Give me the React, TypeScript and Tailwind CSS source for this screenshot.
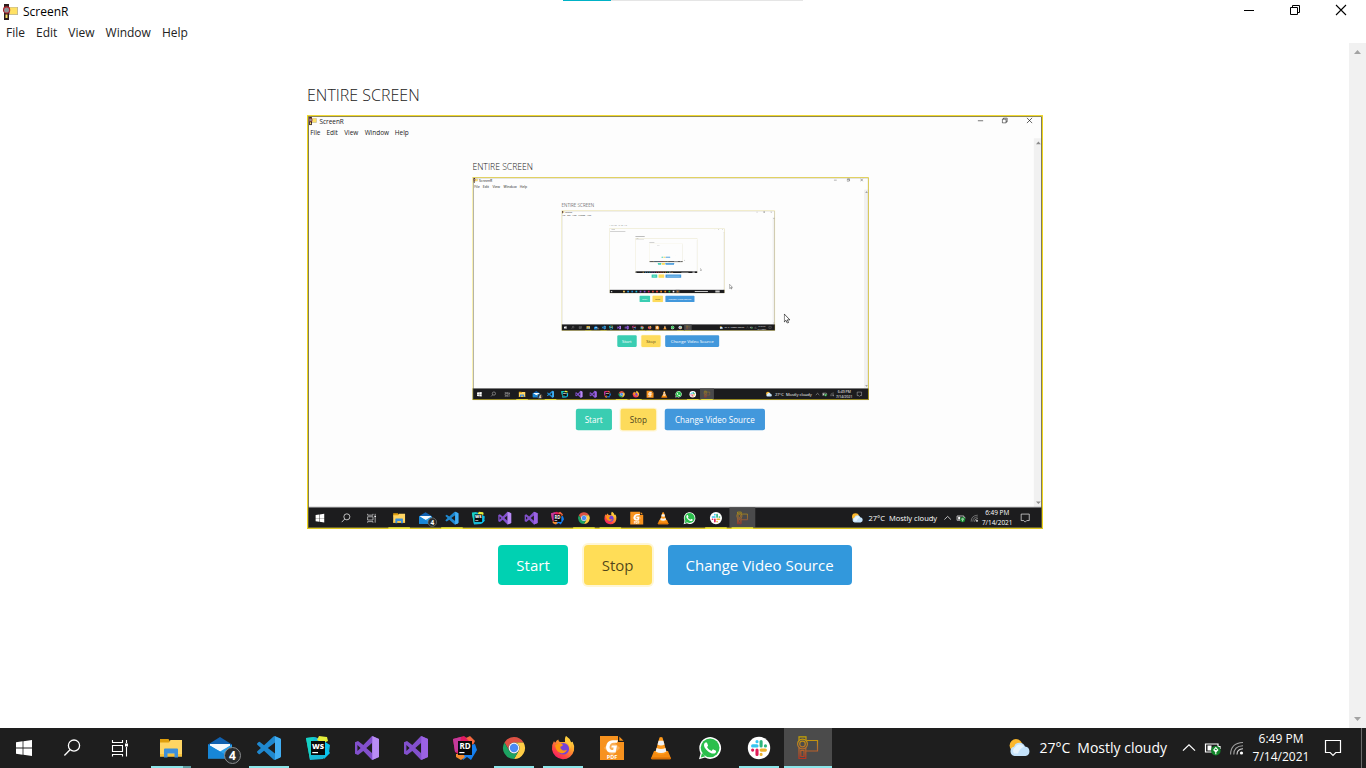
import type { ComponentType, ReactNode, SVGProps } from "react";

type IconProps = SVGProps<SVGSVGElement>;
type Icon = ComponentType<IconProps>;

const FRAME_FONT = "'Open Sans', 'Noto Sans', sans-serif";

function Icon24({ children, ...rest }: IconProps & { children: ReactNode }) {
  return (
    <svg width={24} height={24} viewBox="0 0 24 24" overflow="visible" aria-hidden="true" {...rest}>
      {children}
    </svg>
  );
}

const StartLogo: Icon = (p) => (
  <Icon24 {...p}>
    <path fill="#fff" d="M4 6.3 10.6 5.3V11.6H4ZM11.4 5.2 20 4V11.6H11.4ZM4 12.4H10.6V18.7L4 17.7ZM11.4 12.4H20V20L11.4 18.8Z" />
  </Icon24>
);

const SearchGlyph: Icon = (p) => (
  <Icon24 {...p}>
    <g fill="none" stroke="#fff" strokeWidth="1.3">
      <circle cx="14" cy="9.6" r="5.6" />
      <path d="M10 13.7 4.4 19.5" />
    </g>
  </Icon24>
);

const TaskViewGlyph: Icon = (p) => (
  <Icon24 {...p}>
    <g fill="none" stroke="#fff" strokeWidth="1.1">
      <path d="M4.5 4V6.5H14.5V4M4.5 9.5H14.5V15.5H4.5ZM4.5 20.5V18.5H14.5V20.5M18.5 4V7M18.5 11V20.5" />
    </g>
    <path fill="#fff" d="M17 7.5H20V10.5H17Z" />
  </Icon24>
);

const Explorer: Icon = (p) => (
  <Icon24 {...p}>
    <path fill="#e09f0c" d="M1 3H9.5L11 5.5V9H1Z" />
    <path fill="#ffd563" d="M1 6.5H10L11.5 4H23V20.5H1Z" />
    <path fill="#f6c13c" d="M1 18H23V20.5H1Z" />
    <path fill="#3d8fda" d="M5 13.5Q5 12.5 6 12.5H18Q19 12.5 19 13.5V21.5H15.5V17.5H8.5V21.5H5Z" />
  </Icon24>
);

const Mail: Icon = (p) => (
  <Icon24 {...p}>
    <path fill="#1061b0" d="M0 8.5 12 1 24 8.5V12H0Z" />
    <path fill="#f4f9fd" d="M2 8H22V10L12 17 2 10Z" />
    <path fill="#2aa1ec" d="M0 8.5 12 15.5 24 8.5V22.5H0Z" />
    <path fill="#1787d8" d="M0 8.5 12 15.5 24 22.5H0Z" />
    <circle cx="24.5" cy="19.5" r="8" fill="#292c2e" stroke="#8a8c8e" strokeWidth="1" />
    <text x="24.5" y="24" textAnchor="middle" fill="#fff" fontSize="12" fontWeight="700" fontFamily={FRAME_FONT}>
      4
    </text>
  </Icon24>
);

const VsCode: Icon = (p) => (
  <Icon24 {...p}>
    <path
      fill="#1f88cf"
      d="M23.15 2.587L18.21.21a1.494 1.494 0 0 0-1.705.29l-9.46 8.63-4.12-3.128a.999.999 0 0 0-1.276.057L.327 7.261A1 1 0 0 0 .326 8.74L3.899 12 .326 15.26a1 1 0 0 0 .001 1.479L1.65 17.94a.999.999 0 0 0 1.276.057l4.12-3.128 9.46 8.63a1.492 1.492 0 0 0 1.704.29l4.942-2.377A1.5 1.5 0 0 0 24 20.06V3.939a1.5 1.5 0 0 0-.85-1.352zm-5.146 14.861L10.826 12l7.178-5.448v10.896z"
    />
    <path fill="#41aef3" d="M18 .2 23.2 2.6Q24 3 24 4V20Q24 21 23.2 21.4L18 23.8Z" />
  </Icon24>
);

function StudioMark({ slab, ...p }: IconProps & { slab: string }) {
  return (
    <Icon24 {...p}>
      <path
        fill="#8250cc"
        fillRule="evenodd"
        d="M17 0 24 3V21L17 24 8.3 15 3 19 0 17.7V6.3L3 5 8.3 9ZM17 7 11.3 12 17 17ZM2.4 9V15L5.6 12Z"
      />
      <path fill={slab} d="M17.3 0 24 3V21L17.3 24Z" />
    </Icon24>
  );
}

const Studio: Icon = (p) => <StudioMark slab="#b98cf4" {...p} />;
const StudioOlder: Icon = (p) => <StudioMark slab="#9b62e4" {...p} />;

const WebStorm: Icon = (p) => (
  <Icon24 {...p}>
    <path fill="#19b8d8" d="M0 2 9 1 14 3 24 9 23 17 17 23 4 24Z" />
    <path fill="#15d2c3" d="M0 2 8 1 5 14 4 24Z" />
    <path fill="#e5ef3b" d="M11 4 13 0 21 1 22 5 17 7Z" />
    <path fill="#08c4f0" d="M19 6 23 9 21 13 24 17 18 23Z" />
    <path fill="#0a0a0a" d="M5 5H19V19H5Z" />
    <text x="12" y="12.6" textAnchor="middle" fill="#fff" fontSize="7.5" fontWeight="800" fontFamily={FRAME_FONT}>
      WS
    </text>
    <path fill="#fff" d="M6.3 16H12V17.2H6.3Z" />
  </Icon24>
);

const Rider: Icon = (p) => (
  <Icon24 {...p}>
    <path fill="#e01b62" d="M0 3 11 0 18 5V12L8 20 2 16Z" />
    <path fill="#c33a9b" d="M0 3 8 1 6 15 2 16Z" />
    <path fill="#f4683f" d="M13 2 17 0 22 5 20 9 17 6Z" />
    <path fill="#1580f0" d="M18 9 22 8 24 14 18 24 14 21 10 24 7 19Z" />
    <path fill="#f58a2c" d="M3 18 10 18 12 21 8 24 3 21Z" />
    <path fill="#0a0a0a" d="M5 5H19V19H5Z" />
    <text x="12" y="12.8" textAnchor="middle" fill="#fff" fontSize="8" fontWeight="700" fontFamily={FRAME_FONT}>
      RD
    </text>
    <path fill="#fff" d="M6.3 16H11.5V17.2H6.3Z" />
  </Icon24>
);

const Chrome: Icon = (p) => (
  <Icon24 {...p}>
    <path fill="#dd5144" d="M2.47 6.5A11 11 0 0 1 21.53 6.5H12A5.5 5.5 0 0 0 7.24 14.75Z" />
    <path fill="#ffcd46" d="M12 6.5H21.53A11 11 0 0 1 12 23L16.76 14.75A5.5 5.5 0 0 0 12 6.5Z" />
    <path fill="#1da362" d="M2.47 6.5 7.24 14.75A5.5 5.5 0 0 0 16.76 14.75L12 23A11 11 0 0 1 2.47 6.5Z" />
    <circle cx="12" cy="12" r="5.4" fill="#f5f5f5" />
    <circle cx="12" cy="12" r="4.2" fill="#4a8af4" />
  </Icon24>
);

const Firefox: Icon = (p) => (
  <Icon24 {...p}>
    <defs>
      <linearGradient id="fox" x1="0.9" y1="0" x2="0.2" y2="1">
        <stop offset="0" stopColor="#fff04e" />
        <stop offset="0.4" stopColor="#ffa12c" />
        <stop offset="0.75" stopColor="#ff4543" />
        <stop offset="1" stopColor="#f5156c" />
      </linearGradient>
    </defs>
    <path
      fill="url(#fox)"
      d="M15 0Q18.5 2 20 6Q21 6.5 21.5 5.5Q24 10 23 14.5A11.2 11.2 0 0 1 1 13.5Q.6 8.5 3 5Q3.5 6.5 4.5 6.5Q5 4.5 7.3 3.5Q7.5 5.5 9 6H14Q13.5 2.5 15 0Z"
    />
    <circle cx="12.3" cy="12.8" r="5.8" fill="#7542d8" />
    <path fill="#ff980e" d="M4 9.5Q8 6 12 8.8Q11.8 10.4 9.3 10.8Q9 13 11.5 14.2Q14 15 16 13.8Q14.4 17.6 10.4 17.2Q5.5 16.6 4 9.5Z" />
    <path fill="#ffcb3a" d="M14.5 6.3Q19.5 8 18.6 13.5Q21 9.5 18.4 6.5Q15.8 4 15 0Q13.4 3 14.5 6.3Z" />
  </Icon24>
);

const Foxit: Icon = (p) => (
  <Icon24 {...p}>
    <path fill="#f7921e" d="M0 0H18V6H24V24H0Z" />
    <path fill="#f7921e" d="M19.3 .5 23.5 4.7H19.3Z" />
    <path fill="#f9ad55" d="M12 4 20 12 12 20 4 12Z" />
    <path
      fill="#fff"
      d="M18 4.2H13Q6.5 4.5 6 11Q6 16.6 11.5 16.6H15.6L17 9.6H11.8L11.3 11.6H13.6L13.2 14H11.6Q9.2 13.6 9.6 10.6Q10.2 7 13.6 6.8H17Z"
    />
    <text x="12" y="22.8" textAnchor="middle" fill="#fff" fontSize="5.5" fontWeight="700" fontFamily={FRAME_FONT}>
      PDF
    </text>
  </Icon24>
);

const Vlc: Icon = (p) => (
  <Icon24 {...p}>
    <path fill="#f58b10" d="M5 15H19L22 22.5Q22 23.3 21 23.3H3Q2 23.3 2 22.5Z" />
    <path fill="#d86f04" d="M2 21.5H22V22.5Q22 23.3 21 23.3H3Q2 23.3 2 22.5Z" />
    <path fill="#ff9a1c" d="M10.5 1.5Q12 .5 13.5 1.5L17.8 17Q12 20.5 6.2 17Z" />
    <path fill="#f1f3f5" d="M9.6 4.7H14.4L15.5 8.6Q12 10.3 8.5 8.6ZM7.6 12Q12 14.2 16.4 12L17.4 15.6Q12 18.6 6.6 15.6Z" />
  </Icon24>
);

const WhatsApp: Icon = (p) => (
  <Icon24 {...p}>
    <path fill="#fff" d="M1 23.2 2.6 17.2A10.9 10.9 0 1 1 7 21.6Z" />
    <path fill="#2bbf4c" d="M2.8 21.4 4 17 7.4 20.2Z" />
    <circle cx="12.1" cy="11.8" r="9.4" fill="#2bbf4c" />
    <path
      fill="#fff"
      d="M17.472 14.382c-.297-.149-1.758-.867-2.03-.967-.273-.099-.471-.148-.67.15-.197.297-.767.966-.94 1.164-.173.199-.347.223-.644.075-.297-.15-1.255-.463-2.39-1.475-.883-.788-1.48-1.761-1.653-2.059-.173-.297-.018-.458.13-.606.134-.133.298-.347.446-.52.149-.174.198-.298.298-.497.099-.198.05-.371-.025-.52-.075-.149-.669-1.612-.916-2.207-.242-.579-.487-.5-.669-.51-.173-.008-.371-.01-.57-.01-.198 0-.52.074-.792.372-.272.297-1.04 1.016-1.04 2.479 0 1.462 1.065 2.875 1.213 3.074.149.198 2.096 3.2 5.077 4.487.709.306 1.262.489 1.694.625.712.227 1.36.195 1.871.118.571-.085 1.758-.719 2.006-1.413.248-.694.248-1.289.173-1.413-.074-.124-.272-.198-.57-.347z"
    />
  </Icon24>
);

const Slack: Icon = (p) => (
  <Icon24 {...p}>
    <circle cx="12" cy="12" r="11.2" fill="#fff" />
    <g strokeWidth="3.1" strokeLinecap="round" fill="none">
      <path stroke="#36c5f0" d="M5.6 9.9H10M10 5.6V5.7" />
      <path stroke="#2eb67d" d="M14.1 5.6V9.9M18.4 9.9H18.5" />
      <path stroke="#ecb22e" d="M14.1 14.1H18.4M14.1 18.4V18.5" />
      <path stroke="#e01e5a" d="M10 14.1V18.4M5.6 14.1H5.7" />
    </g>
  </Icon24>
);

const CamcorderOutline: Icon = (p) => (
  <Icon24 {...p}>
    <defs>
      <linearGradient id="cam" gradientUnits="userSpaceOnUse" x1="0" y1="0" x2="0" y2="24">
        <stop offset="0" stopColor="#c8a800" />
        <stop offset="0.5" stopColor="#b8702c" />
        <stop offset="1" stopColor="#b82c20" />
      </linearGradient>
    </defs>
    <g fill="none" stroke="url(#cam)" strokeWidth="1.2">
      <path d="M3 4V.8H10V4M10.5 4.5H21.5V15H10M3 12V22.5H9.8V12M4.8 14.5H8V20.5H4.8Z" />
      <circle cx="6.5" cy="8" r="4.9" />
      <circle cx="6.5" cy="8" r="2.8" />
    </g>
  </Icon24>
);

const Camcorder: Icon = (p) => (
  <svg width={16} height={16} viewBox="0 0 16 16" aria-hidden="true" {...p}>
    <path fill="#2c1d1d" d="M1 0H6V3H6.500V11H6V16H1Z" />
    <path fill="#b9b39a" d="M6.500 3H15V11H6.500Z" />
    <path fill="#ffe164" d="M7 3.5H14.2V10.3H7ZM2.5 10.5H4.5V14H2.5Z" />
    <circle cx="3.6" cy="6" r="3.1" fill="#8d9397" stroke="#b3222b" strokeWidth="1.1" />
  </svg>
);

const Weather: Icon = (p) => (
  <Icon24 {...p}>
    <circle cx="8" cy="9.5" r="6.4" fill="#fbb72c" />
    <path fill="#c4e2fa" d="M6.5 20A4.7 4.7 0 0 1 6 10.8 5.8 5.8 0 0 1 17 10.5 4.8 4.8 0 0 1 17.5 20Z" />
    <path fill="#e6f4fe" d="M6.2 17.5A3.7 3.7 0 0 1 7 11.5 5.2 5.2 0 0 1 16 10.6Q11 13.5 10 17.5Z" />
  </Icon24>
);

const Chevron: Icon = (p) => (
  <Icon24 {...p}>
    <path fill="none" stroke="#fff" strokeWidth="1.3" d="M6 14.6 12 8.8 18 14.6" />
  </Icon24>
);

const Battery: Icon = (p) => (
  <Icon24 {...p}>
    <path fill="none" stroke="#fff" strokeWidth="1.2" d="M4.5 8H17V16H4.5ZM17.5 10.5H19V13" />
    <path fill="#fff" d="M6.5 9.5H10.5V14.5H6.5Z" />
    <circle cx="14.8" cy="14.7" r="4.8" fill="#12862a" />
    <path fill="none" stroke="#fff" strokeWidth="1.1" d="M14.8 18.2V14M14.8 11.6 12.8 14 14.8 16 16.8 14Z" />
  </Icon24>
);

const Wifi: Icon = (p) => (
  <Icon24 {...p}>
    <g fill="none" strokeWidth="1.1">
      <path stroke="#a2a2a2" d="M5.6 18.5Q5.6 7 18 6.5M8.8 18.5Q8.8 10 18 9.8" />
      <path stroke="#d8d8d8" d="M12 18.5Q12 13 18 12.8" />
    </g>
    <circle cx="16.5" cy="17" r="1.6" fill="#fff" />
  </Icon24>
);

const ActionCenter: Icon = (p) => (
  <Icon24 {...p}>
    <path fill="none" stroke="#fff" strokeWidth="1.2" d="M4.5 4.5H19.5V16.5H14.8L12 19.4 9.2 16.5H4.5Z" />
  </Icon24>
);

const MinimizeGlyph: Icon = (p) => (
  <svg width={12} height={12} viewBox="0 0 12 12" aria-hidden="true" {...p}>
    <path stroke="#000" d="M1 6.5H11" />
  </svg>
);

const RestoreGlyph: Icon = (p) => (
  <svg width={12} height={12} viewBox="0 0 12 12" fill="none" aria-hidden="true" {...p}>
    <path stroke="#000" d="M1.5 3.5H8.5V10.5H1.5ZM3.5 3.5V1.5H10.5V8.5H8.5" />
  </svg>
);

const CloseGlyph: Icon = (p) => (
  <svg width={12} height={12} viewBox="0 0 12 12" aria-hidden="true" {...p}>
    <path stroke="#000" strokeWidth="1.1" d="M1 1 11 11M11 1 1 11" />
  </svg>
);

const Pointer: Icon = (p) => (
  <svg width={12} height={19} viewBox="0 0 12 19" aria-hidden="true" {...p}>
    <path fill="#fff" stroke="#000" strokeWidth="1.2" d="M.6 1V16L4 12.8 6.4 18.2 8.8 17.1 6.5 12H11.2Z" />
  </svg>
);

type Running = "none" | "open" | "grouped" | "active";

const SHELL: { name: string; icon: Icon }[] = [
  { name: "Start menu", icon: StartLogo },
  { name: "Search", icon: SearchGlyph },
  { name: "Task View", icon: TaskViewGlyph },
];

const APPS: { name: string; icon: Icon; running: Running; tint: string }[] = [
  { name: "File Explorer", icon: Explorer, running: "grouped", tint: "#ffd563" },
  { name: "Mail", icon: Mail, running: "none", tint: "#2aa1ec" },
  { name: "Visual Studio Code", icon: VsCode, running: "open", tint: "#1f88cf" },
  { name: "WebStorm", icon: WebStorm, running: "none", tint: "#19b8d8" },
  { name: "Visual Studio", icon: Studio, running: "none", tint: "#8250cc" },
  { name: "Visual Studio 2019", icon: StudioOlder, running: "none", tint: "#8250cc" },
  { name: "Rider", icon: Rider, running: "none", tint: "#e01b62" },
  { name: "Chrome", icon: Chrome, running: "open", tint: "#dd5144" },
  { name: "Firefox", icon: Firefox, running: "open", tint: "#ff4543" },
  { name: "Foxit PDF", icon: Foxit, running: "none", tint: "#f7921e" },
  { name: "VLC", icon: Vlc, running: "none", tint: "#f58b10" },
  { name: "WhatsApp", icon: WhatsApp, running: "none", tint: "#2bbf4c" },
  { name: "Slack", icon: Slack, running: "open", tint: "#ffffff" },
  { name: "ScreenR", icon: CamcorderOutline, running: "active", tint: "#b8702c" },
];

const MENUS = ["File", "Edit", "View", "Window", "Help"];
const MENU_X = [6, 36, 69, 107, 163];

const PREVIEW = { x: 307, y: 115, width: 736, height: 414 };

/** Labels, glyphs and app icons of a frame that is still large enough to read. */
function FrameDetail() {
  return (
    <g>
      <Camcorder x={3} y={3} />
      <g fontSize="12" fill="#222">
        <text x="23" y="16">ScreenR</text>
        {MENUS.map((m, i) => (
          <text key={m} x={MENU_X[i]} y="37">
            {m}
          </text>
        ))}
      </g>
      <text x="307" y="102" fontSize="16" fontWeight="300" fill="#222">
        ENTIRE SCREEN
      </text>
      <g fontSize="15" textAnchor="middle">
        <text x="532" y="571" fill="#fff">Start</text>
        <text x="615" y="571" fill="#4d441e">Stop</text>
        <text x="757" y="571" fill="#fff">Change Video Source</text>
      </g>
      {SHELL.map(({ name, icon: Glyph }, i) => (
        <Glyph key={name} x={12 + i * 48} y={736} />
      ))}
      {APPS.map(({ name, icon: Glyph }, i) => (
        <Glyph key={name} x={159 + i * 49} y={736} />
      ))}
      <Weather x={1010} y={736} />
      <g fill="#fff" fontSize="14">
        <text x="1042" y="753">27°C</text>
        <text x="1080" y="753">Mostly cloudy</text>
      </g>
      <Chevron x={1177} y={736} />
      <Battery x={1202} y={736} />
      <Wifi x={1227} y={736} />
      <g fill="#fff" fontSize="12" textAnchor="middle">
        <text x="1281" y="743">6:49 PM</text>
        <text x="1281" y="761">7/14/2021</text>
      </g>
      <ActionCenter x={1321} y={736} />
    </g>
  );
}

/** Blocks of colour for a frame only a few dozen pixels wide. */
function FrameSketch() {
  return (
    <g>
      <path fill="#a8a8a8" d="M23 8H65V15H23ZM6 29H188V36H6ZM307 91H417V101H307Z" />
      <path fill="#fff" opacity="0.5" d="M516 561H548V570H516ZM681 561H833V570H681Z" />
      <path fill="#c8c8c8" d="M16 740H32V756H16ZM1011 741H1167V753H1011ZM1255 734H1307V758H1255Z" />
      {APPS.map(({ name, tint }, i) => (
        <rect key={name} x={161 + i * 49} y="738" width="20" height="20" fill={tint} />
      ))}
    </g>
  );
}

/** One captured frame of the desktop; the preview inside it holds the frame before. */
function CapturedFrame({ level, levels, ...box }: IconProps & { level: number; levels: number }) {
  return (
    <svg viewBox="0 0 1366 768" fontFamily={FRAME_FONT} {...box}>
      <rect width="1366" height="768" fill="#fdfdfd" />
      <MinimizeGlyph x={1244} y={4} />
      <RestoreGlyph x={1289} y={4} />
      <CloseGlyph x={1335} y={4} />
      <rect x="1349" y="43" width="17" height="685" fill="#f1f1f1" />
      <path fill="#8b8b8b" d="M1353 54H1362L1357.500 49ZM1353 717H1362L1357.500 722Z" />
      {level < levels ? <CapturedFrame level={level + 1} levels={levels} {...PREVIEW} /> : null}

      <rect x="499" y="545" width="67" height="40" rx="4" fill="#3acdb2" />
      <rect x="580" y="543" width="70" height="44" rx="5" fill="#fff6d5" />
      <rect x="582" y="545" width="66" height="40" rx="4" fill="#fddb5b" />
      <rect x="664" y="545" width="186" height="40" rx="4" fill="#4298dc" />

      <rect y="728" width="1366" height="40" fill="#1c1c1e" />
      <rect y="727" width="1366" height="1.500" fill="#77777a" />
      <rect x="784" y="728" width="48" height="40" fill="#4a4a4b" />
      {level <= 3 ? <FrameDetail /> : <FrameSketch />}

      <rect x="2.8" y="2.8" width="1360.4" height="762.4" fill="none" stroke="#5a573c" strokeWidth="1.500" />
      <rect x="1" y="1" width="1364" height="766" fill="none" stroke="#efd51c" strokeWidth="2" />
      {APPS.map(({ name, running }, i) =>
        running === "none" ? null : (
          <rect key={name} x={151 + i * 49} y="765" width="40" height="3" fill="#f4ec3c" />
        ),
      )}
      <Pointer x={885} y={368} />
    </svg>
  );
}

function TitleBar() {
  const control = "flex h-5 w-[46px] items-center justify-center hover:bg-gray-200";
  return (
    <header className="relative shrink-0 text-xs leading-4">
      <div className="absolute inset-x-0 top-0 flex justify-center">
        <div className="h-px w-[240px] bg-[#e5e5e5]">
          <div className="h-px w-1/5 bg-[#00b2c6]" />
        </div>
      </div>
      <div className="flex h-[23px] items-start pl-[3px] pr-[2px]">
        <div className="flex h-full items-center gap-1">
          <Camcorder />
          <h1 className="text-black">ScreenR</h1>
        </div>
        <div className="ml-auto flex">
          <button type="button" aria-label="Minimize" className={control}>
            <MinimizeGlyph />
          </button>
          <button type="button" aria-label="Restore" className={control}>
            <RestoreGlyph />
          </button>
          <button type="button" aria-label="Close" className={control}>
            <CloseGlyph />
          </button>
        </div>
      </div>
      <nav className="flex h-5 items-center gap-[11px] px-[6px]">
        {MENUS.map((m) => (
          <button key={m} type="button" className="text-[#222]">
            {m}
          </button>
        ))}
      </nav>
    </header>
  );
}

function ScrollGutter() {
  return (
    <div className="flex w-[17px] shrink-0 flex-col items-center justify-between bg-[#f1f1f1] py-[7px]">
      <svg width="7" height="4" viewBox="0 0 7 4" aria-hidden="true">
        <path fill="#a3a3a3" d="M0 4H7L3.500 0Z" />
      </svg>
      <svg width="7" height="4" viewBox="0 0 7 4" aria-hidden="true">
        <path fill="#a3a3a3" d="M0 0H7L3.500 4Z" />
      </svg>
    </div>
  );
}

function RunningMark({ running }: { running: Running }) {
  if (running === "none") return null;
  if (running === "active") return <span className="absolute inset-x-0 bottom-0 h-[2px] bg-[#8be5e9]" />;
  return (
    <span className="absolute inset-x-1 bottom-0 flex h-[2px] bg-[#8be5e9]">
      {running === "grouped" ? <span className="ml-auto w-2 bg-[#5c9ca0]" /> : null}
    </span>
  );
}

function Taskbar() {
  return (
    <footer className="flex h-10 shrink-0 bg-[#1e1e1e] text-white">
      <div className="flex">
        {SHELL.map(({ name, icon: Glyph }) => (
          <button key={name} type="button" aria-label={name} className="flex w-12 items-center justify-center">
            <Glyph />
          </button>
        ))}
      </div>
      <div className="ml-[3px] flex gap-px">
        {APPS.map(({ name, icon: Glyph, running }) => (
          <button
            key={name}
            type="button"
            aria-label={name}
            className={
              running === "active"
                ? "relative flex w-12 items-center justify-center bg-[#4b4b4b]"
                : "relative flex w-12 items-center justify-center"
            }
          >
            <Glyph />
            <RunningMark running={running} />
          </button>
        ))}
      </div>
      <div className="ml-auto flex items-center">
        <button type="button" className="flex items-center gap-[7px] text-sm leading-5">
          <Weather />
          <span>27°C</span>
          <span>Mostly cloudy</span>
        </button>
        <button type="button" aria-label="Show hidden icons" className="ml-[10px]">
          <Chevron />
        </button>
        <button type="button" aria-label="Battery">
          <Battery />
        </button>
        <button type="button" aria-label="Network">
          <Wifi />
        </button>
        <button type="button" className="ml-[6px] flex w-[52px] flex-col items-center text-xs leading-[18px]">
          <span>6:49 PM</span>
          <span>7/14/2021</span>
        </button>
        <button type="button" aria-label="Notifications" className="ml-[14px] mr-4">
          <ActionCenter />
        </button>
        <span className="mr-1 h-full w-px bg-[#6b6b6b]" />
      </div>
    </footer>
  );
}

export default function App() {
  const action = "h-10 rounded px-[18px] text-[15px] leading-6";
  return (
    <div className="flex h-screen flex-col bg-white font-['Open_Sans','Noto_Sans',sans-serif]">
      <TitleBar />
      <div className="flex min-h-0 flex-1">
        <main className="min-w-0 flex-1 overflow-hidden pl-px pt-10">
          <div className="mx-auto w-full max-w-[736px]">
            <h2 className="mb-2 text-base font-light leading-6 text-[#222]">ENTIRE SCREEN</h2>
            <CapturedFrame
              level={1}
              levels={6}
              role="img"
              aria-label="Live preview of the entire screen"
              className="block aspect-[16/9] w-full"
            />
            <div className="mt-4 flex justify-center gap-4">
              <button type="button" className={`${action} bg-[#00d1b2] text-white`}>
                Start
              </button>
              <button type="button" className={`${action} bg-[#ffdd57] text-black/70 ring-2 ring-[#ffdd57]/25`}>
                Stop
              </button>
              <button type="button" className={`${action} bg-[#3298dc] text-white`}>
                Change Video Source
              </button>
            </div>
          </div>
        </main>
        <ScrollGutter />
      </div>
      <Taskbar />
    </div>
  );
}
